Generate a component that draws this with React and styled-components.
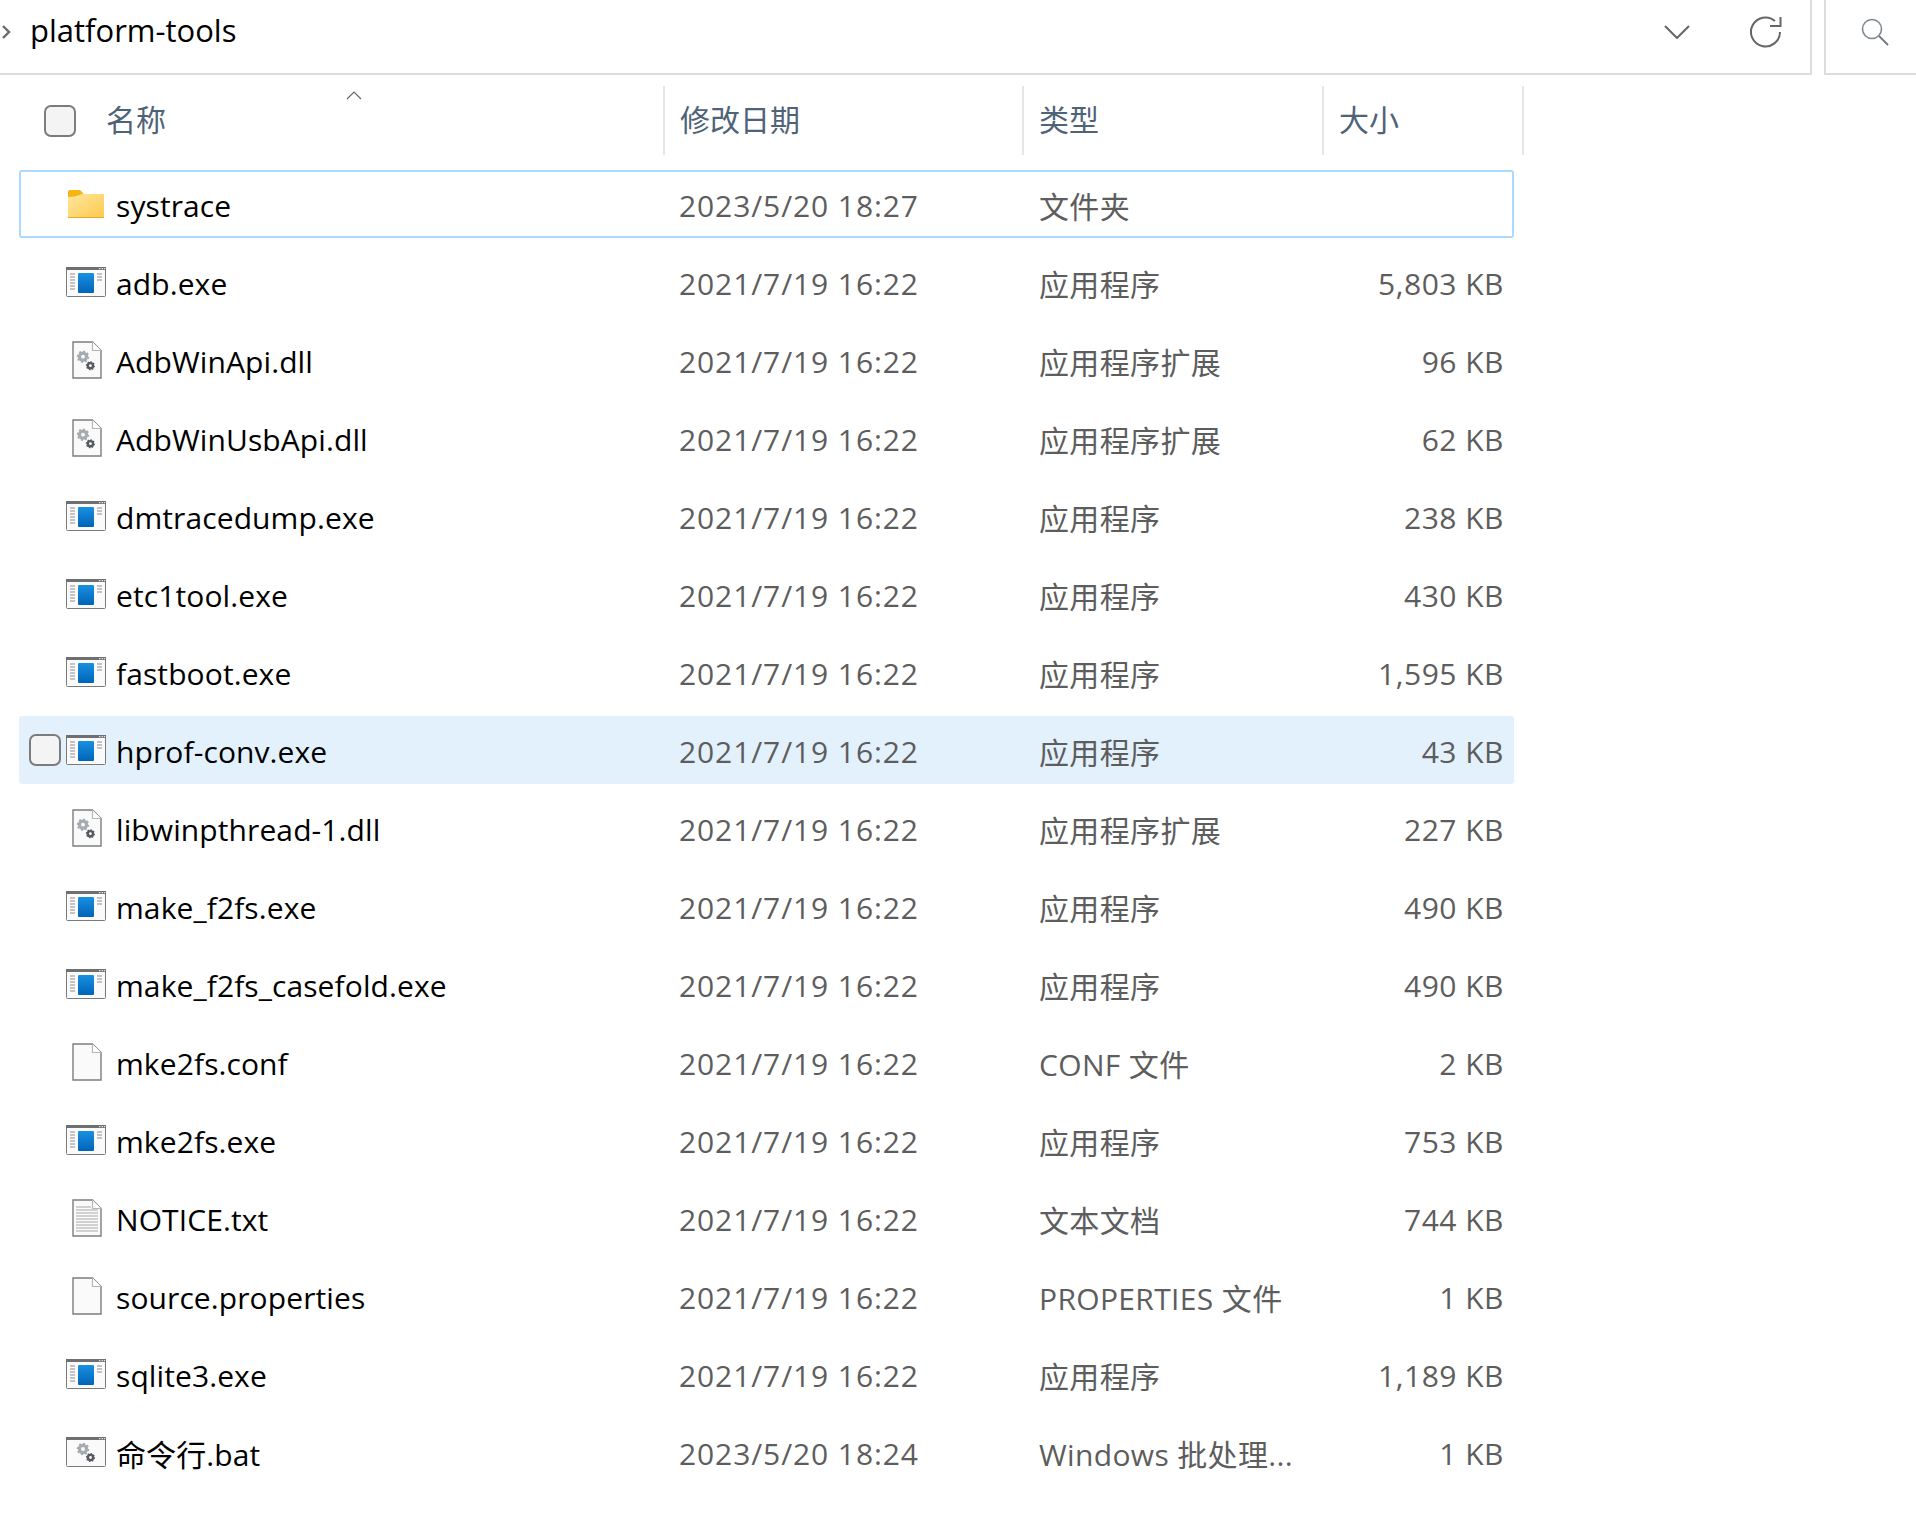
import React from "react";
import styled, { createGlobalStyle } from "styled-components";

const GlobalStyle = createGlobalStyle`
  html, body {
    margin: 0;
    padding: 0;
    background: #fff;
    font-family: "Open Sans", "Noto Sans CJK SC", sans-serif;
  }
  * { box-sizing: border-box; }
`;

const Page = styled.div`
  width: 1916px;
  height: 1534px;
  overflow: hidden;
  background: #fff;
`;

// Top bar
const TopBar = styled.div`
  display: flex;
  height: 75px;
  gap: 12px;
`;
const AddressBar = styled.div`
  width: 1812px;
  display: flex;
  align-items: center;
  padding: 0 28px 10px 1px;
  border-right: 2px solid #dcdcdc;
  border-bottom: 2px solid #dcdcdc;
`;
const PathText = styled.span`
  margin-left: 19px;
  flex: 1;
  font-size: 31px;
  color: #000;
  padding-bottom: 4px;
`;
const BarIcon = styled.svg`
  display: block;
  flex: none;
  margin-left: ${(p) => p.$gap || 0}px;
`;
const SearchBox = styled.div`
  flex: 1;
  display: flex;
  align-items: center;
  padding: 0 0 10px 35px;
  border-left: 2px solid #dcdcdc;
  border-bottom: 2px solid #dcdcdc;
`;

// Column header
const Header = styled.div`
  display: flex;
  height: 69px;
  margin-top: 11px;
`;
const HeaderCell = styled.div`
  position: relative;
  width: ${(p) => p.$width}px;
  display: flex;
  align-items: center;
  padding-left: ${(p) => p.$pad || 15}px;
  border-right: 2px solid #e6e6e6;
  font-size: 30px;
  color: #4f6378;
`;
const CheckBox = styled.span`
  flex: none;
  width: 32px;
  height: 32px;
  border: 2px solid #7c7c7c;
  border-radius: 7px;
  background: #f4f4f4;
`;
const HeaderLabel = styled.span`
  margin-left: ${(p) => p.$gap || 0}px;
  padding-bottom: 6px;
`;
const SortMark = styled.svg`
  position: absolute;
  left: 346px;
  top: 5px;
`;

// File rows
const List = styled.div`
  display: flex;
  flex-direction: column;
  gap: 10px;
  width: 1495px;
  margin: 15px 0 0 19px;
`;
const Row = styled.div`
  display: grid;
  grid-template-columns: 660px 360px 1fr 200px;
  align-items: center;
  height: 68px;
  padding-right: 10px;
  border-radius: 3px;
  background: ${(p) => (p.$hover ? "#e3f1fd" : "transparent")};
  box-shadow: ${(p) => (p.$selected ? "inset 0 0 0 2px #acdafe" : "none")};
`;
const NameCell = styled.div`
  display: flex;
  align-items: center;
`;
const CheckSlot = styled.div`
  width: 47px;
  padding-left: 10px;
  flex: none;
  display: flex;
`;
const IconSlot = styled.div`
  width: 40px;
  height: 40px;
  flex: none;
  display: flex;
  align-items: center;
  justify-content: center;
`;
const FileName = styled.span`
  margin-left: 10px;
  padding-top: 2px;
  font-size: 30px;
  letter-spacing: 0.1px;
  color: #000;
  white-space: nowrap;
`;
const Detail = styled.span`
  padding-top: 2px;
  font-size: 30px;
  color: #5d5d5d;
  white-space: nowrap;
`;
const DateText = styled(Detail)`
  letter-spacing: 0.9px;
`;
const TypeText = styled(Detail)`
  letter-spacing: 0.35px;
`;
const SizeText = styled(Detail)`
  text-align: right;
  letter-spacing: 0.5px;
`;
const PageSvg = styled.svg`
  display: block;
  margin-left: 2px;
`;

// Gear drawn as a thick ring (body) plus a dashed ring (teeth)
const Gear = ({ cx, cy, r, color }) => (
  <g fill="none" stroke={color}>
    <circle cx={cx} cy={cy} r={r * 0.68} strokeWidth={r * 0.62} />
    <circle cx={cx} cy={cy} r={r} strokeWidth={r * 0.4} pathLength="16" strokeDasharray="1 1" />
  </g>
);

const FolderIcon = () => (
  <svg width="36" height="28" viewBox="0 0 36 28">
    <defs>
      <linearGradient id="folderFront" x1="0" y1="0" x2="1" y2="1">
        <stop offset="0" stopColor="#ffe79d" />
        <stop offset="1" stopColor="#fdc94f" />
      </linearGradient>
    </defs>
    <path d="M0 2 Q0 0 2 0 H11 Q13 0 14 2 L15.5 4 H36 V10 H0 Z" fill="#f6b513" />
    <path d="M0 7 Q8 7 14 4 H36 V27 Q36 28 35 28 H1 Q0 28 0 27 Z" fill="url(#folderFront)" />
    <path d="M0 27 H36 V28 H0 Z" fill="#eeaa1c" />
  </svg>
);

const WindowFrame = ({ children }) => (
  <svg width="40" height="30" viewBox="0 0 40 30">
    <rect x="0.5" y="0.5" width="39" height="29" rx="1" fill="#fafafa" stroke="#7a7a7a" />
    <rect x="0" y="0" width="40" height="3" fill="#6f6f6f" />
    <path d="M33 1h1.4v1.2H33zM35.6 1H37v1.2h-1.4zM37.9 1h1.2v1.2h-1.2z" fill="#e4e4e4" />
    {children}
  </svg>
);

const ExeIcon = () => (
  <WindowFrame>
    <defs>
      <linearGradient id="exeBlue" x1="0" y1="0" x2="0" y2="1">
        <stop offset="0" stopColor="#1a90e0" />
        <stop offset="1" stopColor="#0064b8" />
      </linearGradient>
    </defs>
    <rect x="12" y="6" width="16" height="20" rx="1" fill="url(#exeBlue)" />
    <path d="M4 7h5M4 10h5M4 13h5M4 16h5M4 19h5M4 22h5M31 7h5M31 10h5M31 13h5" stroke="#8d8d8d" strokeWidth="1" />
  </WindowFrame>
);

const BatIcon = () => (
  <WindowFrame>
    <Gear cx={17} cy={12} r={5.2} color="#a4abb2" />
    <Gear cx={24.5} cy={20.5} r={3.8} color="#555a60" />
  </WindowFrame>
);

const PageOutline = ({ children }) => (
  <PageSvg width="30" height="38" viewBox="0 0 30 38">
    <path d="M1 1 H20.500 L29 9.500 V37 H1 Z" fill="#fafafa" stroke="#7d7d7d" strokeWidth="1.400" />
    <path d="M20.500 1 V9.500 H29" fill="#fff" stroke="#b5b5b5" strokeWidth="1.200" />
    {children}
  </PageSvg>
);

const DllIcon = () => (
  <PageOutline>
    <Gear cx={11} cy={15.700} r={5.2} color="#a4abb2" />
    <Gear cx={18.400} cy={24.700} r={3.8} color="#555a60" />
  </PageOutline>
);

const TextIcon = () => (
  <PageOutline>
    <path d="M4 8h15M4 11h22M4 14h22M4 17h22M4 20h22M4 23h22M4 26h22M4 29h22M4 32h22" stroke="#a8a8a8" strokeWidth="1" />
  </PageOutline>
);

const icons = {
  folder: FolderIcon,
  exe: ExeIcon,
  dll: DllIcon,
  blank: () => <PageOutline />,
  text: TextIcon,
  bat: BatIcon,
};

const EXE = "应用程序";
const DLL = "应用程序扩展";
const STAMP = "2021/7/19 16:22";

const files = [
  { name: "systrace", date: "2023/5/20 18:27", type: "文件夹", size: "", icon: "folder", selected: true },
  { name: "adb.exe", date: STAMP, type: EXE, size: "5,803 KB", icon: "exe" },
  { name: "AdbWinApi.dll", date: STAMP, type: DLL, size: "96 KB", icon: "dll" },
  { name: "AdbWinUsbApi.dll", date: STAMP, type: DLL, size: "62 KB", icon: "dll" },
  { name: "dmtracedump.exe", date: STAMP, type: EXE, size: "238 KB", icon: "exe" },
  { name: "etc1tool.exe", date: STAMP, type: EXE, size: "430 KB", icon: "exe" },
  { name: "fastboot.exe", date: STAMP, type: EXE, size: "1,595 KB", icon: "exe" },
  { name: "hprof-conv.exe", date: STAMP, type: EXE, size: "43 KB", icon: "exe", hover: true },
  { name: "libwinpthread-1.dll", date: STAMP, type: DLL, size: "227 KB", icon: "dll" },
  { name: "make_f2fs.exe", date: STAMP, type: EXE, size: "490 KB", icon: "exe" },
  { name: "make_f2fs_casefold.exe", date: STAMP, type: EXE, size: "490 KB", icon: "exe" },
  { name: "mke2fs.conf", date: STAMP, type: "CONF 文件", size: "2 KB", icon: "blank" },
  { name: "mke2fs.exe", date: STAMP, type: EXE, size: "753 KB", icon: "exe" },
  { name: "NOTICE.txt", date: STAMP, type: "文本文档", size: "744 KB", icon: "text" },
  { name: "source.properties", date: STAMP, type: "PROPERTIES 文件", size: "1 KB", icon: "blank" },
  { name: "sqlite3.exe", date: STAMP, type: EXE, size: "1,189 KB", icon: "exe" },
  { name: "命令行.bat", date: "2023/5/20 18:24", type: "Windows 批处理...", size: "1 KB", icon: "bat" },
];

const FileRow = ({ file }) => {
  const Icon = icons[file.icon];
  return (
    <Row $hover={file.hover} $selected={file.selected}>
      <NameCell>
        <CheckSlot>{file.hover && <CheckBox />}</CheckSlot>
        <IconSlot>
          <Icon />
        </IconSlot>
        <FileName>{file.name}</FileName>
      </NameCell>
      <DateText>{file.date}</DateText>
      <TypeText>{file.type}</TypeText>
      <SizeText>{file.size}</SizeText>
    </Row>
  );
};

export default function App() {
  return (
    <Page>
      <GlobalStyle />
      <TopBar>
        <AddressBar>
          <BarIcon width="10" height="16" viewBox="0 0 10 16">
            <path d="M2 2l6 6-6 6" fill="none" stroke="#6a6a6a" strokeWidth="2.400" />
          </BarIcon>
          <PathText>platform-tools</PathText>
          <BarIcon width="26" height="14" viewBox="0 0 26 14">
            <path d="M1 1l12 12L25 1" fill="none" stroke="#666" strokeWidth="2" />
          </BarIcon>
          <BarIcon $gap={60} width="32" height="32" viewBox="0 0 32 32">
            <path d="M30 16A14.500 14.500 0 1 1 25 5M30.500 1V10H20" fill="none" stroke="#666" strokeWidth="2" />
          </BarIcon>
        </AddressBar>
        <SearchBox>
          <BarIcon width="28" height="28" viewBox="0 0 28 28">
            <circle cx="11" cy="11" r="9.500" fill="none" stroke="#7d8a96" strokeWidth="1.600" />
            <path d="M18 18l9 9" stroke="#6f7780" strokeWidth="1.800" />
          </BarIcon>
        </SearchBox>
      </TopBar>
      <Header>
        <HeaderCell $width={665} $pad={44}>
          <CheckBox />
          <HeaderLabel $gap={30}>名称</HeaderLabel>
          <SortMark width="16" height="9" viewBox="0 0 16 9">
            <path d="M1 8l7-7 7 7" fill="none" stroke="#666" strokeWidth="1.200" />
          </SortMark>
        </HeaderCell>
        <HeaderCell $width={359}>
          <HeaderLabel>修改日期</HeaderLabel>
        </HeaderCell>
        <HeaderCell $width={300}>
          <HeaderLabel>类型</HeaderLabel>
        </HeaderCell>
        <HeaderCell $width={200}>
          <HeaderLabel>大小</HeaderLabel>
        </HeaderCell>
      </Header>
      <List>
        {files.map((file) => (
          <FileRow key={file.name} file={file} />
        ))}
      </List>
    </Page>
  );
}
